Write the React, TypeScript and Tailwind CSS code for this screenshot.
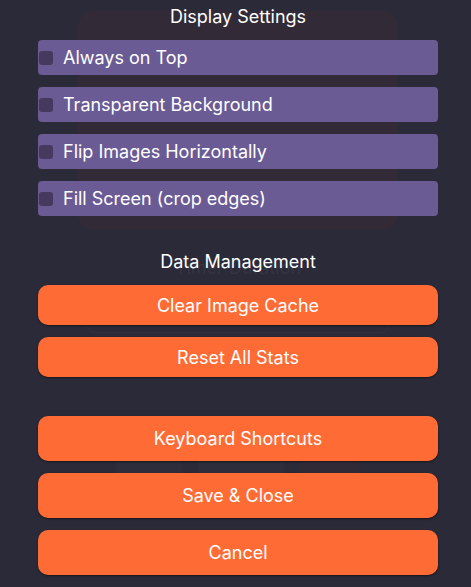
import { useState } from "react";

const toggles = [
  "Always on Top",
  "Transparent Background",
  "Flip Images Horizontally",
  "Fill Screen (crop edges)",
];

function Ghost() {
  // faded app behind the settings overlay
  return (
    <div className="flex flex-col items-center pt-[11px] pl-[5px] text-[#353442]">
      <div className="h-[219px] w-[320px] rounded-2xl bg-[#322b37] px-4 pt-[24px] text-center text-[18px] text-[#3a313e]">
        Start Session
      </div>
      <div className="mt-[24px] text-[18px]">Timer Duration</div>
      <div className="mt-[16px] flex h-[36px] w-[302px] items-center justify-center rounded-lg border border-[#31303e] text-[18px]">
        30 s
      </div>
      <div className="mt-[20px] text-[18px]">Images per Session</div>
      <div className="mt-[50px] flex gap-4">
        <div className="h-[60px] w-[66px] rounded-2xl bg-[#2e2d3b]" />
        <div className="h-[60px] w-[86px] rounded-2xl bg-[#2e2d3b]" />
        <div className="h-[60px] w-[60px] rounded-2xl bg-[#302a36]" />
      </div>
    </div>
  );
}

export default function App() {
  const [checked, setChecked] = useState<boolean[]>([false, false, false, false]);

  return (
    <div className="relative h-[587px] w-full overflow-hidden bg-[#2b2a38] font-['Inter',sans-serif]">
      <Ghost />

      {/* Settings overlay */}
      <div className="absolute inset-0 flex flex-col items-center pl-[5px] text-white">
        <h2 className="mt-[6px] text-[18px] leading-[22px]">Display Settings</h2>

        <div className="mt-[12px] flex w-[400px] flex-col gap-[12px]">
          {toggles.map((label, i) => (
            <label
              key={label}
              className="flex h-[35px] cursor-pointer items-center rounded-[4px] bg-[#6b5b95] pl-[1px] text-[18px]"
            >
              <input
                type="checkbox"
                checked={checked[i]}
                onChange={() =>
                  setChecked((c) => c.map((v, j) => (j === i ? !v : v)))
                }
                className="h-[14px] w-[14px] appearance-none rounded-[3px] bg-[#453a5d]"
              />
              <span className="ml-[10px]">{label}</span>
            </label>
          ))}
        </div>

        <h2 className="mt-[35px] text-[18px] leading-[22px]">Data Management</h2>

        <div className="mt-[12px] flex w-[400px] flex-col gap-[12px]">
          <button className="h-[40px] rounded-[10px] bg-[#ff6b35] text-[18px] shadow-[0_1px_2px_rgba(0,0,0,0.5)]">
            Clear Image Cache
          </button>
          <button className="h-[40px] rounded-[10px] bg-[#ff6b35] text-[18px] shadow-[0_1px_2px_rgba(0,0,0,0.5)]">
            Reset All Stats
          </button>
        </div>

        <div className="mt-[39px] flex w-[400px] flex-col gap-[12px]">
          <button className="h-[45px] rounded-[10px] bg-[#ff6b35] text-[18px] shadow-[0_1px_2px_rgba(0,0,0,0.5)]">
            Keyboard Shortcuts
          </button>
          <button className="h-[45px] rounded-[10px] bg-[#ff6b35] text-[18px] shadow-[0_1px_2px_rgba(0,0,0,0.5)]">
            Save &amp; Close
          </button>
          <button className="h-[45px] rounded-[10px] bg-[#ff6b35] text-[18px] shadow-[0_1px_2px_rgba(0,0,0,0.5)]">
            Cancel
          </button>
        </div>
      </div>
    </div>
  );
}
